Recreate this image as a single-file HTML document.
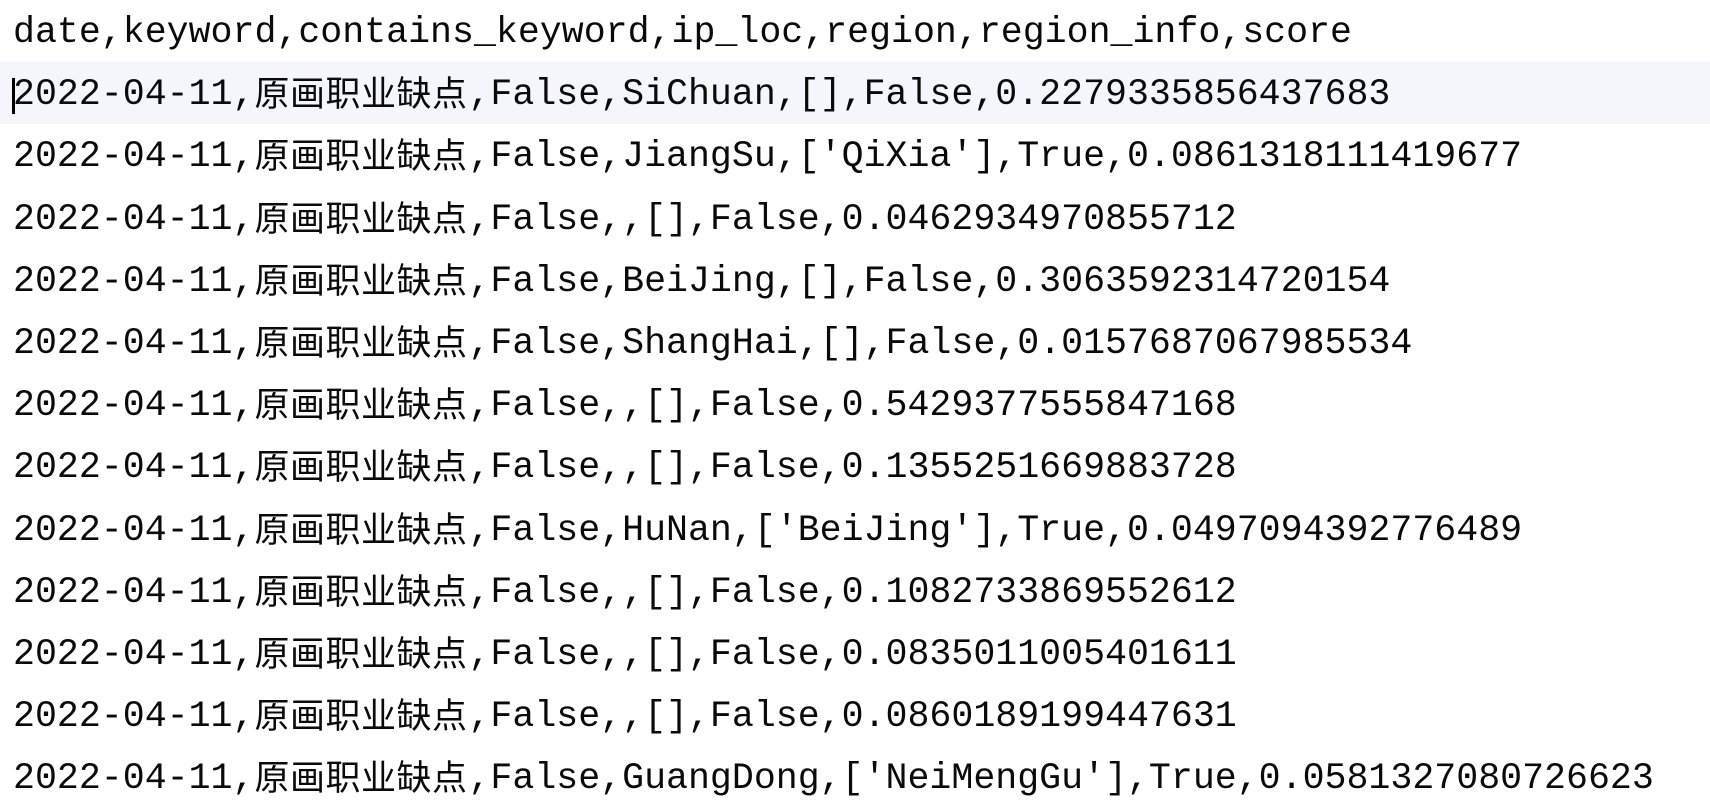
<!DOCTYPE html>
<html><head><meta charset="utf-8"><style>
html,body{margin:0;padding:0;background:#fff;width:1710px;height:812px;overflow:hidden}
.ed{position:absolute;left:0;top:0;width:1710px}
.l{height:59.2px;padding-top:3px;line-height:59.2px;padding-left:13px;white-space:pre;font-family:"Liberation Mono",monospace;font-size:36.6px;color:#0a0a0a;position:relative}
.hl{background:#f5f6fc}
.c{font-family:"Noto Sans CJK SC",sans-serif;font-size:35px;display:inline-block;width:214px;vertical-align:top;position:relative;top:-3px;letter-spacing:0.5px}
.cur{position:absolute;left:12px;top:16px;width:2.5px;height:36px;background:#000}
</style></head><body><div class="ed">
<div class="l">date,keyword,contains_keyword,ip_loc,region,region_info,score</div>
<div class="l hl"><span class="cur"></span>2022-04-11,<span class="c">原画职业缺点</span>,False,SiChuan,[],False,0.2279335856437683</div>
<div class="l">2022-04-11,<span class="c">原画职业缺点</span>,False,JiangSu,['QiXia'],True,0.0861318111419677</div>
<div class="l">2022-04-11,<span class="c">原画职业缺点</span>,False,,[],False,0.0462934970855712</div>
<div class="l">2022-04-11,<span class="c">原画职业缺点</span>,False,BeiJing,[],False,0.3063592314720154</div>
<div class="l">2022-04-11,<span class="c">原画职业缺点</span>,False,ShangHai,[],False,0.0157687067985534</div>
<div class="l">2022-04-11,<span class="c">原画职业缺点</span>,False,,[],False,0.5429377555847168</div>
<div class="l">2022-04-11,<span class="c">原画职业缺点</span>,False,,[],False,0.1355251669883728</div>
<div class="l">2022-04-11,<span class="c">原画职业缺点</span>,False,HuNan,['BeiJing'],True,0.0497094392776489</div>
<div class="l">2022-04-11,<span class="c">原画职业缺点</span>,False,,[],False,0.1082733869552612</div>
<div class="l">2022-04-11,<span class="c">原画职业缺点</span>,False,,[],False,0.0835011005401611</div>
<div class="l">2022-04-11,<span class="c">原画职业缺点</span>,False,,[],False,0.0860189199447631</div>
<div class="l">2022-04-11,<span class="c">原画职业缺点</span>,False,GuangDong,['NeiMengGu'],True,0.0581327080726623</div>
</div></body></html>
